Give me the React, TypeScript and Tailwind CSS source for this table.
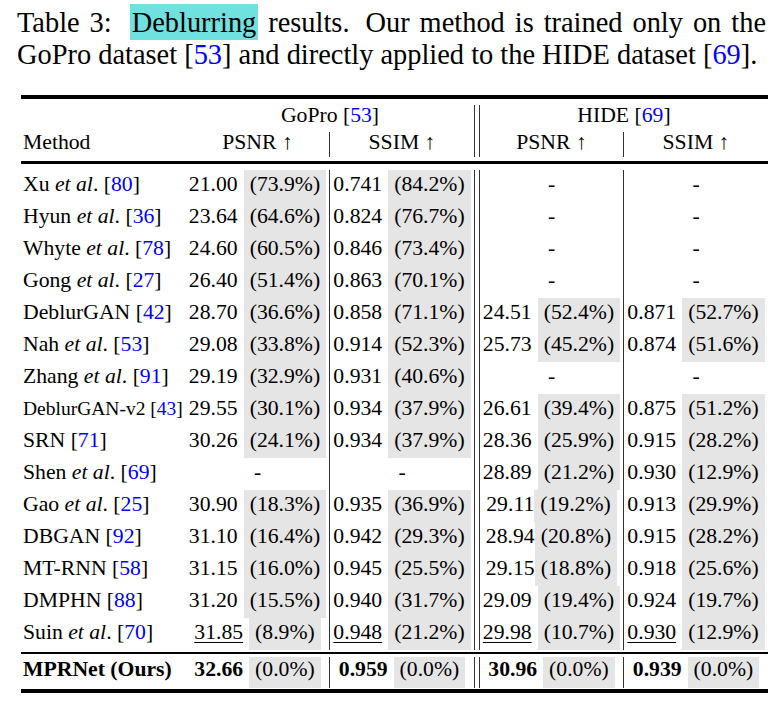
import React from "react";

type Cell = [string, string] | null;

interface Row {
  method: React.ReactNode;
  small?: boolean;
  gp: Cell;
  gs: Cell;
  hp: Cell;
  hs: Cell;
  tightHp?: boolean;
  under?: boolean;
}

const Ref = ({ children }: { children: React.ReactNode }) => (
  <span className="text-[#0000ff]">{children}</span>
);

const EtAl = ({ name, cite }: { name: string; cite: string }) => (
  <>
    {name} <i>et al</i>. [<Ref>{cite}</Ref>]
  </>
);

const Named = ({ name, cite }: { name: string; cite: string }) => (
  <>
    {name} [<Ref>{cite}</Ref>]
  </>
);

const rows: Row[] = [
  { method: <EtAl name="Xu" cite="80" />, gp: ["21.00", "(73.9%)"], gs: ["0.741", "(84.2%)"], hp: null, hs: null },
  { method: <EtAl name="Hyun" cite="36" />, gp: ["23.64", "(64.6%)"], gs: ["0.824", "(76.7%)"], hp: null, hs: null },
  { method: <EtAl name="Whyte" cite="78" />, gp: ["24.60", "(60.5%)"], gs: ["0.846", "(73.4%)"], hp: null, hs: null },
  { method: <EtAl name="Gong" cite="27" />, gp: ["26.40", "(51.4%)"], gs: ["0.863", "(70.1%)"], hp: null, hs: null },
  { method: <Named name="DeblurGAN" cite="42" />, gp: ["28.70", "(36.6%)"], gs: ["0.858", "(71.1%)"], hp: ["24.51", "(52.4%)"], hs: ["0.871", "(52.7%)"] },
  { method: <EtAl name="Nah" cite="53" />, gp: ["29.08", "(33.8%)"], gs: ["0.914", "(52.3%)"], hp: ["25.73", "(45.2%)"], hs: ["0.874", "(51.6%)"] },
  { method: <EtAl name="Zhang" cite="91" />, gp: ["29.19", "(32.9%)"], gs: ["0.931", "(40.6%)"], hp: null, hs: null },
  { method: <Named name="DeblurGAN-v2" cite="43" />, small: true, gp: ["29.55", "(30.1%)"], gs: ["0.934", "(37.9%)"], hp: ["26.61", "(39.4%)"], hs: ["0.875", "(51.2%)"] },
  { method: <Named name="SRN" cite="71" />, gp: ["30.26", "(24.1%)"], gs: ["0.934", "(37.9%)"], hp: ["28.36", "(25.9%)"], hs: ["0.915", "(28.2%)"] },
  { method: <EtAl name="Shen" cite="69" />, gp: null, gs: null, hp: ["28.89", "(21.2%)"], hs: ["0.930", "(12.9%)"] },
  { method: <EtAl name="Gao" cite="25" />, gp: ["30.90", "(18.3%)"], gs: ["0.935", "(36.9%)"], hp: ["29.11", "(19.2%)"], hs: ["0.913", "(29.9%)"], tightHp: true },
  { method: <Named name="DBGAN" cite="92" />, gp: ["31.10", "(16.4%)"], gs: ["0.942", "(29.3%)"], hp: ["28.94", "(20.8%)"], hs: ["0.915", "(28.2%)"], tightHp: true },
  { method: <Named name="MT-RNN" cite="58" />, gp: ["31.15", "(16.0%)"], gs: ["0.945", "(25.5%)"], hp: ["29.15", "(18.8%)"], hs: ["0.918", "(25.6%)"], tightHp: true },
  { method: <Named name="DMPHN" cite="88" />, gp: ["31.20", "(15.5%)"], gs: ["0.940", "(31.7%)"], hp: ["29.09", "(19.4%)"], hs: ["0.924", "(19.7%)"] },
  { method: <EtAl name="Suin" cite="70" />, gp: ["31.85", "(8.9%)"], gs: ["0.948", "(21.2%)"], hp: ["29.98", "(10.7%)"], hs: ["0.930", "(12.9%)"], under: true },
];

const cols = "grid grid-cols-[165px_143px_145px_6px_143px_145px]";

interface MetricProps {
  cell: Cell;
  line?: boolean;
  tight?: boolean;
  under?: boolean;
  bold?: boolean;
  lead: string;
}

const Metric: React.FC<MetricProps> = ({ cell, line, tight, under, bold, lead }) => {
  const border = line ? "border-l border-[#333]" : "";
  if (!cell) {
    return <div className={`flex justify-center ${lead} ${border}`}>-</div>;
  }
  return (
    <div className={`flex justify-center ${lead} ${border}`}>
      <span
        className={`${bold ? "font-bold" : ""} ${
          under ? "underline decoration-1 underline-offset-[3px]" : ""
        }`}
      >
        {cell[0]}
      </span>
      <span className={`${tight ? "ml-0" : "ml-[6px]"} bg-[#e5e5e5] px-[6px]`}>{cell[1]}</span>
    </div>
  );
};

const App: React.FC = () => {
  return (
    <div className="w-[777px] h-[702px] overflow-hidden bg-white text-black font-['Liberation_Serif',serif]">
      {/* Caption */}
      <div className="ml-[17px] w-[749px] pt-[7px] text-[28.4px] leading-[31.5px]">
        <div className="text-justify [text-align-last:justify] whitespace-nowrap">
          Table 3:{" "}
          <span className="ml-[8px] bg-[#6fe1df] pt-[3px] pb-[2px] px-[2px]">Deblurring</span>{" "}
          results.{" "}
          <span className="ml-[6px]">Our</span> method is trained only on the
        </div>
        <div>
          GoPro dataset [<Ref>53</Ref>] and directly applied to the HIDE dataset [<Ref>69</Ref>].
        </div>
      </div>

      {/* Table */}
      <div className="ml-[21px] mt-[25px] w-[747px] text-[21.7px]">
        <div className="h-[4px] bg-black" />

        {/* Header */}
        <div className="pt-[6px] pb-[4px]">
          <div className={`${cols} h-[27px] leading-[21px]`}>
            <div />
            <div className="col-span-2 text-center">
              GoPro [<Ref>53</Ref>]
            </div>
            <div className="border-x border-[#333]" />
            <div className="col-span-2 text-center">
              HIDE [<Ref>69</Ref>]
            </div>
          </div>
          <div className={`${cols} h-[25px] leading-[21px]`}>
            <div className="pl-[2px]">Method</div>
            <div className="text-center">PSNR ↑</div>
            <div className="text-center border-l border-[#333]">SSIM ↑</div>
            <div className="border-x border-[#333]" />
            <div className="text-center">PSNR ↑</div>
            <div className="text-center border-l border-[#333]">SSIM ↑</div>
          </div>
        </div>

        <div className="h-[3px] bg-black" />

        {/* Data rows */}
        <div className="pt-[6px] pb-[2px]">
          {rows.map((r, i) => (
            <div key={i} className={`${cols} h-[32px]`}>
              <div
                className={`pl-[2px] whitespace-nowrap ${
                  r.small ? "text-[19.5px] leading-[30px]" : "leading-[29px]"
                }`}
              >
                {r.method}
              </div>
              <Metric cell={r.gp} under={r.under} lead="leading-[29px]" />
              <Metric cell={r.gs} under={r.under} line lead="leading-[29px]" />
              <div className="border-x border-[#333]" />
              <Metric cell={r.hp} under={r.under} tight={r.tightHp} lead="leading-[29px]" />
              <Metric cell={r.hs} under={r.under} line lead="leading-[29px]" />
            </div>
          ))}
        </div>

        <div className="h-[2px] bg-black" />

        {/* Ours */}
        <div className="pt-[3px] pb-[1px]">
          <div className={`${cols} h-[31px]`}>
            <div className="pl-[2px] whitespace-nowrap font-bold leading-[25px]">MPRNet (Ours)</div>
            <Metric cell={["32.66", "(0.0%)"]} bold lead="leading-[25px]" />
            <Metric cell={["0.959", "(0.0%)"]} bold line lead="leading-[25px]" />
            <div className="border-x border-[#333]" />
            <Metric cell={["30.96", "(0.0%)"]} bold lead="leading-[25px]" />
            <Metric cell={["0.939", "(0.0%)"]} bold line lead="leading-[25px]" />
          </div>
        </div>

        <div className="h-[4px] bg-black" />
      </div>
    </div>
  );
};

export default App;
